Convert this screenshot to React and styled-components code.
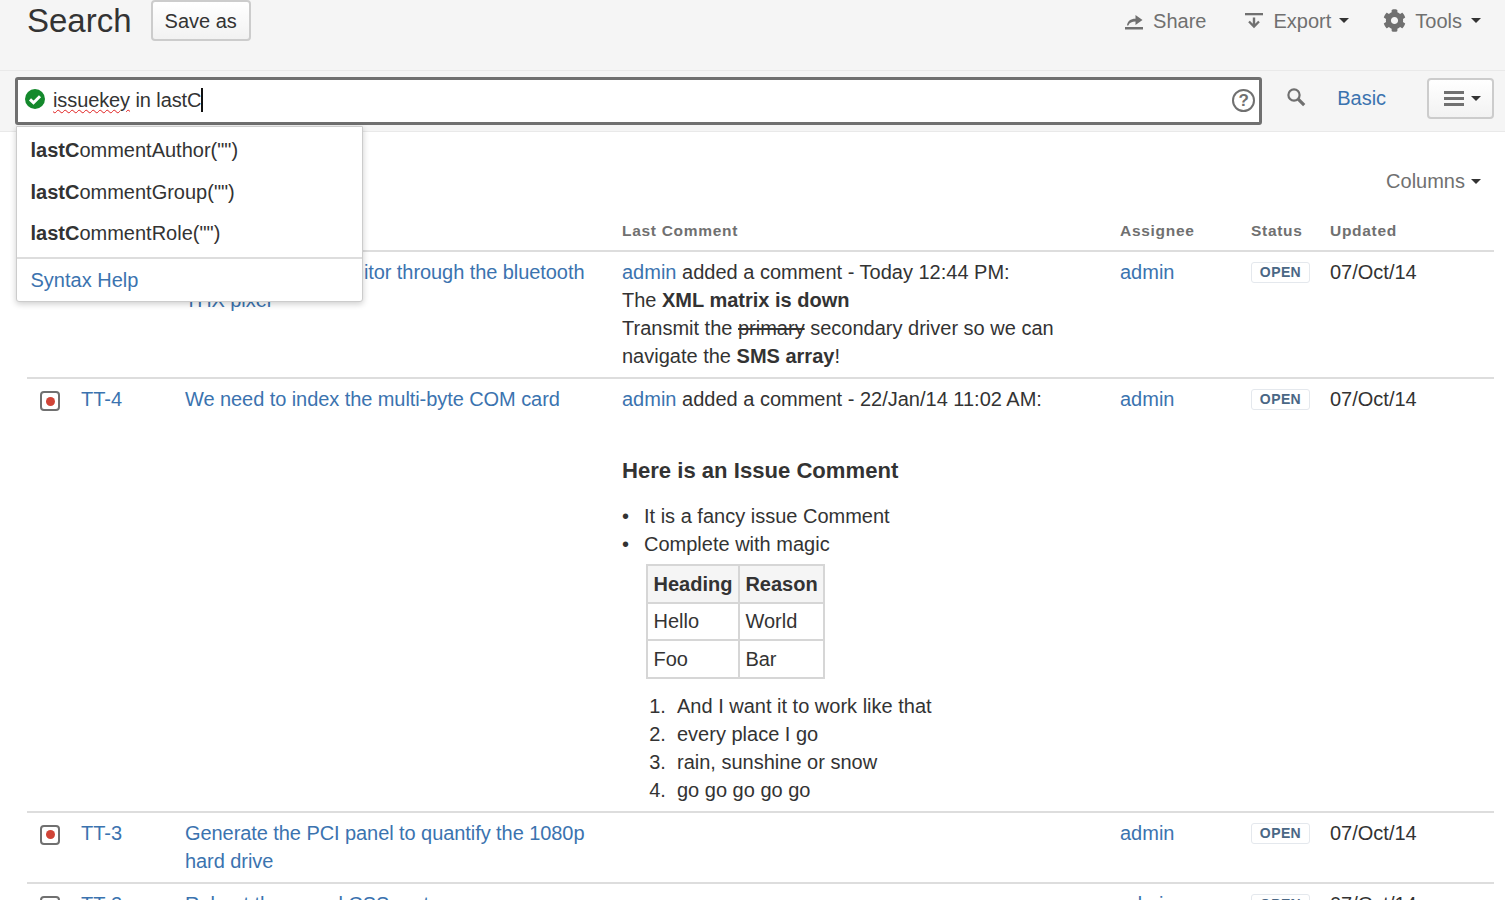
import styled, { createGlobalStyle } from "styled-components";
import { FaCog } from "react-icons/fa";

const GlobalStyle = createGlobalStyle`
  html, body {
    margin: 0;
    padding: 0;
    background: #fff;
  }
  body {
    font-family: "Liberation Sans", Arial, sans-serif;
    font-size: 20px;
    line-height: 28px;
    color: #333;
  }
`;

const Page = styled.div`
  height: 900px;
  overflow: hidden;
`;

const TopBar = styled.header`
  display: flex;
  justify-content: space-between;
  height: 70px;
  padding: 0 24px 0 27px;
  background: #f5f5f5;
  border-bottom: 1px solid #e9e9e9;
`;

const TitleGroup = styled.div`
  display: flex;
  align-items: flex-start;
  gap: 19px;
`;

const Title = styled.h1`
  margin: 0;
  font-size: 33px;
  line-height: 41px;
  font-weight: 400;
  color: #333;
`;

const Button = styled.button`
  display: flex;
  align-items: center;
  justify-content: center;
  gap: 7px;
  height: 41px;
  padding: 0 12px;
  font: inherit;
  color: #333;
  background: linear-gradient(#fff, #f2f2f2);
  border: 2px solid #ccc;
  border-radius: 4px;
`;

const MenuButton = styled(Button)`
  justify-content: flex-start;
  width: 67px;
  margin: 1px 0 0 41px;
  padding: 0 0 0 15px;
`;

const Actions = styled.div`
  display: flex;
  align-items: flex-start;
  gap: 34px;
`;

const Action = styled.a`
  display: flex;
  align-items: center;
  gap: 9px;
  height: 41px;
  margin-right: ${(p) => p.$after || 0}px;
  color: #707070;
`;

const Caret = styled.span`
  width: 0;
  height: 0;
  margin-left: ${(p) => p.$gap || 0}px;
  border-left: 5px solid transparent;
  border-right: 5px solid transparent;
  border-top: 5px solid #333;
`;

const SearchBar = styled.div`
  position: relative;
  display: flex;
  align-items: flex-start;
  height: 61px;
  padding: 6px 11px 0 15px;
  background: #f5f5f5;
  border-bottom: 1px solid #e9e9e9;
  box-sizing: border-box;
`;

const QueryBox = styled.div`
  display: flex;
  align-items: center;
  box-sizing: border-box;
  width: 1249px;
  height: 48px;
  padding: 0 4px 2px 7px;
  background: #fff;
  border: 3px solid #707070;
  border-radius: 3px;
`;

const QueryCheck = styled.span`
  display: flex;
  margin-bottom: 2px;
`;

const QueryText = styled.div`
  flex: 1;
  display: flex;
  align-items: center;
  margin-left: 8px;
  white-space: pre;
  letter-spacing: -0.1px;
  color: #333;
`;

const Misspelt = styled.span`
  text-decoration: underline wavy #e02020;
  text-decoration-thickness: 1px;
  text-underline-offset: 2px;
`;

const TextCaret = styled.span`
  width: 2px;
  height: 24px;
  background: #111;
`;

const HelpMark = styled.span`
  display: flex;
  align-items: center;
  justify-content: center;
  box-sizing: border-box;
  width: 23px;
  height: 23px;
  font-size: 17px;
  line-height: 1;
  font-weight: 700;
  color: #707070;
  border: 2px solid #707070;
  border-radius: 50%;
`;

const SearchIconWrap = styled.span`
  display: flex;
  margin: 10px 0 0 24px;
`;

const BasicLink = styled.a`
  margin: 7px 0 0 31px;
  color: #3b73af;
`;

const Suggestions = styled.div`
  position: absolute;
  top: 55px;
  left: 16px;
  z-index: 5;
  box-sizing: border-box;
  width: 347px;
  height: 176px;
  padding-top: 3px;
  background: #fff;
  border: 1px solid #ccc;
  border-radius: 0 0 3px 3px;
  box-shadow: 0 2px 6px rgba(0, 0, 0, 0.2);
`;

const Suggestion = styled.div`
  height: 41.7px;
  padding-left: 13.5px;
  line-height: 41px;
  color: #333;
`;

const SuggestionHelp = styled.a`
  display: block;
  margin-top: 2px;
  padding-left: 13.5px;
  border-top: 2px solid #ddd;
  line-height: 42px;
  color: #3b73af;
`;

const Results = styled.section`
  padding: 35px 11px 0 27px;
`;

const ColumnsRow = styled.div`
  display: flex;
  justify-content: flex-end;
  align-items: center;
  height: 28px;
  padding-right: 13px;
  margin-bottom: 16px;
  color: #707070;
`;

const IssueTable = styled.table`
  width: 1467px;
  table-layout: fixed;
  border-collapse: collapse;
`;

const Th = styled.th`
  width: ${(p) => p.$w}px;
  height: 40px;
  padding: 0;
  box-sizing: border-box;
  text-align: left;
  vertical-align: middle;
  font-size: 15.5px;
  letter-spacing: 0.7px;
  color: #707070;
  border-bottom: 2px solid #ddd;
`;

const Row = styled.tr`
  border-bottom: 2px solid #ddd;
`;

const Td = styled.td`
  padding: 6px 30px 7px 0;
  vertical-align: top;
`;

const IconCell = styled(Td)`
  padding-left: 13px;
  padding-right: 0;
`;

const IssueLink = styled.a`
  color: #3b73af;
`;

const SummaryLink = styled(IssueLink)`
  letter-spacing: -0.07px;
`;

const Lozenge = styled.span`
  display: inline-block;
  box-sizing: border-box;
  width: 59px;
  height: 21px;
  font-size: 14px;
  line-height: 19px;
  font-weight: 700;
  text-align: center;
  letter-spacing: 0.4px;
  color: #4a6785;
  background: #fff;
  border: 1px solid #e4e8ed;
  border-radius: 3px;
  vertical-align: 2px;
`;

const BugIcon = styled.span`
  display: flex;
  align-items: center;
  justify-content: center;
  box-sizing: border-box;
  width: 20px;
  height: 20px;
  margin-top: 6px;
  background: #fff;
  border: 2px solid #707070;
  border-radius: 4px;

  &::after {
    content: "";
    width: 9px;
    height: 9px;
    border-radius: 50%;
    background: #d04437;
  }
`;

const CommentHeading = styled.h3`
  margin: 42px 0 15px;
  font-size: 22.1px;
  line-height: 32px;
  font-weight: 700;
`;

const Bullets = styled.ul`
  margin: 0 0 6px;
  padding-left: 22px;

  li::marker {
    content: "•  \u2009";
  }
`;

const InnerTable = styled.table`
  margin: 0 0 13px 24px;
  border-collapse: collapse;
`;

const InnerCell = styled.td`
  height: 37.5px;
  box-sizing: border-box;
  padding: 0 5.5px;
  border: 2px solid #d6d6d6;
  font-weight: ${(p) => (p.$head ? 700 : 400)};
  background: ${(p) => (p.$head ? "#f5f5f5" : "#fff")};
`;

const Numbered = styled.ol`
  margin: 0;
  padding-left: 55px;

  li::marker {
    content: counter(list-item) ".  ";
  }
`;

const ShareIcon = () => (
  <svg width="20" height="18" viewBox="0 0 20 18" fill="#707070">
    <path d="M1 15h18v2.5H1z" />
    <path d="M3 13.5c.4-4.3 3.4-6.8 8.5-6.8V3l7 5-7 5V9.5c-3.6 0-6 1-7.2 4z" />
  </svg>
);

const ExportIcon = () => (
  <svg width="20" height="18" viewBox="0 0 20 18" fill="#707070">
    <path d="M1 1h18v2.3H1z" />
    <path d="M8.8 5.5h2.4v6.2l3-3 1.6 1.6-5.8 5.9-5.8-5.9 1.6-1.6 3 3z" />
  </svg>
);

const CheckIcon = () => (
  <svg width="20" height="20" viewBox="0 0 20 20">
    <circle cx="10" cy="10" r="10" fill="#14892c" />
    <path d="M5 10.3l3.5 3.4L15 7.2" fill="none" stroke="#fff" strokeWidth="3" />
  </svg>
);

const SearchIcon = () => (
  <svg width="20" height="20" viewBox="0 0 20 20" fill="none" stroke="#707070">
    <circle cx="8" cy="8" r="5.6" strokeWidth="2.2" />
    <path d="M12.2 12.2l6 6" strokeWidth="3.2" />
  </svg>
);

const MenuIcon = () => (
  <svg width="20" height="15" viewBox="0 0 20 15" fill="#707070">
    <path d="M0 0h20v3H0zM0 6h20v3H0zM0 12h20v3H0z" />
  </svg>
);

const issues = [
  {
    key: "TT-5",
    summary: "Parse the RAM monitor through the bluetooth THX pixel",
    comment: (
      <>
        <IssueLink>admin</IssueLink> added a comment - Today 12:44 PM:
        <br />
        The <b>XML matrix is down</b>
        <br />
        Transmit the <s>primary</s> secondary driver so we can navigate the{" "}
        <b>SMS array</b>!
      </>
    ),
  },
  {
    key: "TT-4",
    summary: "We need to index the multi-byte COM card",
    comment: (
      <>
        <IssueLink>admin</IssueLink> added a comment - 22/Jan/14 11:02 AM:
        <CommentHeading>Here is an Issue Comment</CommentHeading>
        <Bullets>
          <li>It is a fancy issue Comment</li>
          <li>Complete with magic</li>
        </Bullets>
        <InnerTable>
          <tbody>
            <tr>
              <InnerCell $head>Heading</InnerCell>
              <InnerCell $head>Reason</InnerCell>
            </tr>
            <tr>
              <InnerCell>Hello</InnerCell>
              <InnerCell>World</InnerCell>
            </tr>
            <tr>
              <InnerCell>Foo</InnerCell>
              <InnerCell>Bar</InnerCell>
            </tr>
          </tbody>
        </InnerTable>
        <Numbered>
          <li>And I want it to work like that</li>
          <li>every place I go</li>
          <li>rain, sunshine or snow</li>
          <li>go go go go go</li>
        </Numbered>
      </>
    ),
  },
  {
    key: "TT-3",
    summary: "Generate the PCI panel to quantify the 1080p hard drive",
  },
  {
    key: "TT-2",
    summary: "Reboot the neural CSS port",
  },
];

const App = () => {
  return (
    <Page>
      <GlobalStyle />
      <TopBar>
        <TitleGroup>
          <Title>Search</Title>
          <Button>Save as</Button>
        </TitleGroup>
        <Actions>
          <Action $after={4}>
            <ShareIcon />
            Share
          </Action>
          <Action>
            <ExportIcon />
            Export
            <Caret $gap={-1} />
          </Action>
          <Action>
            <FaCog size={23} color="#707070" />
            Tools
            <Caret />
          </Action>
        </Actions>
      </TopBar>

      <SearchBar>
        <QueryBox>
          <QueryCheck>
            <CheckIcon />
          </QueryCheck>
          <QueryText>
            <Misspelt>issuekey</Misspelt> in lastC
            <TextCaret />
          </QueryText>
          <HelpMark>?</HelpMark>
        </QueryBox>
        <SearchIconWrap>
          <SearchIcon />
        </SearchIconWrap>
        <BasicLink>Basic</BasicLink>
        <MenuButton>
          <MenuIcon />
          <Caret />
        </MenuButton>
        <Suggestions>
          <Suggestion>
            <b>lastC</b>ommentAuthor("")
          </Suggestion>
          <Suggestion>
            <b>lastC</b>ommentGroup("")
          </Suggestion>
          <Suggestion>
            <b>lastC</b>ommentRole("")
          </Suggestion>
          <SuggestionHelp>Syntax Help</SuggestionHelp>
        </Suggestions>
      </SearchBar>

      <Results>
        <ColumnsRow>
          Columns
          <Caret $gap={6} />
        </ColumnsRow>
        <IssueTable>
          <thead>
            <tr>
              <Th $w={54} />
              <Th $w={104} />
              <Th $w={437} />
              <Th $w={498}>Last Comment</Th>
              <Th $w={131}>Assignee</Th>
              <Th $w={79}>Status</Th>
              <Th $w={164}>Updated</Th>
            </tr>
          </thead>
          <tbody>
            {issues.map((issue) => (
              <Row key={issue.key}>
                <IconCell>
                  <BugIcon />
                </IconCell>
                <Td>
                  <IssueLink>{issue.key}</IssueLink>
                </Td>
                <Td>
                  <SummaryLink>{issue.summary}</SummaryLink>
                </Td>
                <Td>{issue.comment}</Td>
                <Td>
                  <IssueLink>admin</IssueLink>
                </Td>
                <Td>
                  <Lozenge>OPEN</Lozenge>
                </Td>
                <Td>07/Oct/14</Td>
              </Row>
            ))}
          </tbody>
        </IssueTable>
      </Results>
    </Page>
  );
};

export default App;
